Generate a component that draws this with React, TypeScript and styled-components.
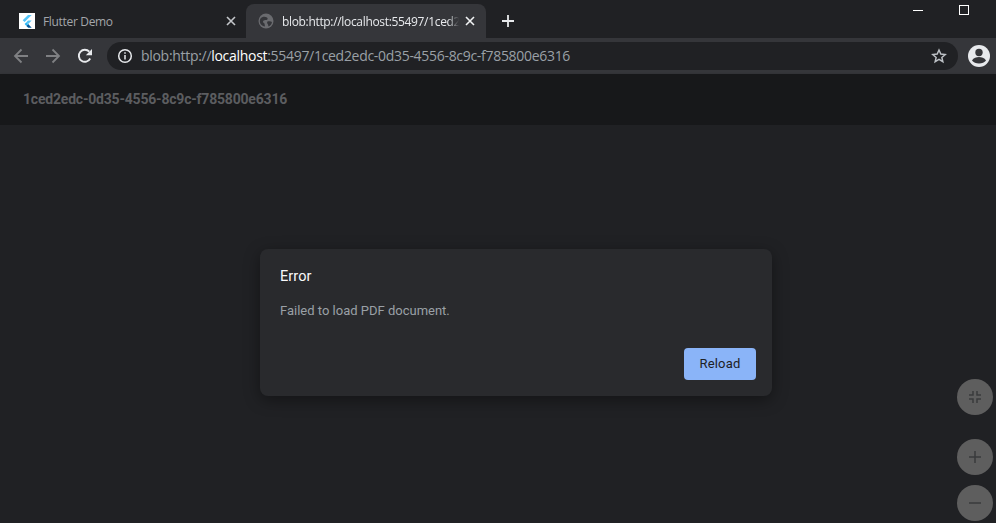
import React from 'react'
import styled, { createGlobalStyle } from 'styled-components'

const GlobalStyle = createGlobalStyle`
  html, body {
    margin: 0;
    padding: 0;
    height: 100%;
    background: #202124;
    overflow: hidden;
  }
  * {
    box-sizing: border-box;
  }
`

const Page = styled.div`
  display: flex;
  flex-direction: column;
  width: 996px;
  height: 523px;
  overflow: hidden;
  font-family: Roboto, "Liberation Sans", sans-serif;
`

const TabStrip = styled.div`
  display: flex;
  align-items: flex-end;
  height: 38px;
  flex: none;
  background: #202124;
`

const Tab = styled.div<{ active?: boolean }>`
  position: relative;
  display: flex;
  align-items: center;
  height: 34px;
  width: ${({ active }) => (active ? '240px' : '246px')};
  padding: ${({ active }) => (active ? '0 8px 0 12px' : '0 7px 0 19px')};
  border-radius: 8px 8px 0 0;
  background: ${({ active }) => (active ? '#35363a' : 'transparent')};
`

const TabTitle = styled.span<{ active?: boolean }>`
  flex: 1;
  margin-left: 8px;
  overflow: hidden;
  white-space: nowrap;
  font-family: "Open Sans", Roboto, sans-serif;
  font-size: 12px;
  letter-spacing: -0.33px;
  color: ${({ active }) => (active ? '#e8eaed' : '#a3a6aa')};
  -webkit-mask-image: ${({ active }) =>
    active ? 'linear-gradient(to right, #000 calc(100% - 14px), transparent calc(100% - 3px))' : 'none'};
`

const TabClose = styled.button`
  display: flex;
  align-items: center;
  justify-content: center;
  flex: none;
  width: 16px;
  height: 16px;
  padding: 0;
  border: 0;
  background: transparent;
`

const NewTab = styled.button`
  display: flex;
  align-items: center;
  justify-content: center;
  align-self: center;
  width: 28px;
  height: 28px;
  margin: 4px 0 0 8px;
  padding: 0;
  border: 0;
  background: transparent;
`

const WindowControls = styled.div`
  display: flex;
  align-self: flex-start;
  gap: 36px;
  margin-left: auto;
  padding: 5px 27px 0 0;
`

const Toolbar = styled.div`
  display: flex;
  align-items: center;
  height: 36px;
  flex: none;
  padding: 0 6px 0 9px;
  background: #35363a;
`

const NavButton = styled.button`
  display: flex;
  align-items: center;
  justify-content: center;
  width: 24px;
  height: 24px;
  margin-right: 8px;
  padding: 0;
  border: 0;
  background: transparent;
`

const Omnibox = styled.div`
  display: flex;
  align-items: center;
  flex: 1;
  height: 28px;
  margin-left: 2px;
  padding: 0 11px 0 10px;
  border-radius: 14px;
  background: #202124;
`

const UrlText = styled.div`
  flex: 1;
  margin-left: 8px;
  padding-bottom: 2px;
  white-space: nowrap;
  font-family: "Open Sans", Roboto, sans-serif;
  font-size: 14px;
  letter-spacing: -0.3px;
  color: #9aa0a6;
`

const UrlHost = styled.span`
  color: #fff;
`

const Avatar = styled.div`
  display: flex;
  align-items: center;
  justify-content: center;
  width: 22px;
  height: 22px;
  margin-left: 10px;
`

const AppBar = styled.div`
  display: flex;
  align-items: center;
  height: 51px;
  flex: none;
  padding: 0 23px 2px;
  background: #17181a;
  box-shadow: 0 1px 3px rgba(0, 0, 0, 0.25);
`

const DocTitle = styled.div`
  font-size: 14px;
  font-weight: 700;
  letter-spacing: -0.2px;
  color: #5c5d60;
`

const Viewer = styled.div`
  position: relative;
  flex: 1;
  display: flex;
  align-items: flex-start;
  justify-content: center;
  padding: 124px 0 0 36px;
  background: #202124;
`

const Dialog = styled.div`
  display: flex;
  flex-direction: column;
  width: 512px;
  height: 147px;
  padding: 19px 16px 16px 20px;
  border-radius: 8px;
  background: #292a2d;
  box-shadow: 0 4px 16px rgba(0, 0, 0, 0.4);
`

const DialogTitle = styled.div`
  font-size: 14.5px;
  font-weight: 400;
  letter-spacing: 0.1px;
  line-height: 18px;
  color: #f8f9fa;
`

const DialogBody = styled.div`
  margin-top: 17px;
  font-size: 13px;
  line-height: 16px;
  color: #9aa0a6;
`

const DialogActions = styled.div`
  display: flex;
  justify-content: flex-end;
  margin-top: auto;
`

const ReloadButton = styled.button`
  width: 72px;
  height: 32px;
  padding: 0 0 2px;
  border: 0;
  border-radius: 4px;
  background: #8ab4f8;
  font-family: Roboto, sans-serif;
  font-size: 13px;
  font-weight: 400;
  letter-spacing: 0.2px;
  color: #202124;
`

const Fab = styled.button<{ top: number }>`
  position: absolute;
  right: 3px;
  top: ${({ top }) => top}px;
  display: flex;
  align-items: center;
  justify-content: center;
  width: 36px;
  height: 36px;
  padding: 0;
  border: 0;
  border-radius: 50%;
  background: #5e5e5e;
`

const CloseIcon = ({ color }: { color: string }) => (
  <svg width="10" height="10" viewBox="0 0 10 10">
    <path d="M1 1l8 8M9 1L1 9" stroke={color} strokeWidth="1.6" />
  </svg>
)

const FlutterFavicon = () => (
  <svg width="16" height="16" viewBox="0 0 16 16">
    <rect width="16" height="16" fill="#fff" />
    <path d="M9 2h3.700L5.600 9.100 3.700 7.300z" fill="#54c5f8" />
    <path d="M9 7.600h3.700L9.200 11.100 7.300 9.300z" fill="#54c5f8" />
    <path d="M7.400 12.900l1.800-1.800 3.500 3.600H9.200z" fill="#01579b" />
    <path d="M5.600 11.100l1.800-1.800 1.800 1.800-1.800 1.800z" fill="#29b6f6" />
  </svg>
)

const GlobeIcon = () => (
  <svg width="16" height="16" viewBox="0 0 16 16">
    <circle cx="8" cy="8" r="7.500" fill="#6a6b6f" />
    <path
      d="M2.500 5.500C4 3.500 7 3 9 4.500c1.200 1 .6 2.300-.6 2.500-1.400.2-2.600 0-3.200 1-.6 1 .3 2 1.300 2.500l.5 3C4 13 2.500 11.500 2 9.500c-.3-1.400 0-3 .5-4zM9.500 8.500c1.500-.5 3.500-.3 4.500.5-.3 2-1.500 3.500-3.500 4.500l-.5-2c-.8-.8-1.200-2.400-.5-3z"
      fill="#35363a"
    />
  </svg>
)

export default function App() {
  return (
    <Page>
      <GlobalStyle />
      <TabStrip>
        <Tab>
          <FlutterFavicon />
          <TabTitle>Flutter Demo</TabTitle>
          <TabClose>
            <CloseIcon color="#c4c7cb" />
          </TabClose>
        </Tab>
        <Tab active>
          <GlobeIcon />
          <TabTitle active>blob:http://localhost:55497/1ced2</TabTitle>
          <TabClose>
            <CloseIcon color="#f1f3f4" />
          </TabClose>
        </Tab>
        <NewTab>
          <svg width="14" height="14" viewBox="0 0 14 14">
            <path d="M7 1v12M1 7h12" stroke="#e8eaed" strokeWidth="1.8" />
          </svg>
        </NewTab>
        <WindowControls>
          <svg width="10" height="10" viewBox="0 0 10 10">
            <path d="M0 5.500h10" stroke="#fff" strokeWidth="1" />
          </svg>
          <svg width="10" height="10" viewBox="0 0 10 10">
            <rect x="0.500" y="0.500" width="9" height="9" fill="none" stroke="#fff" strokeWidth="1" />
          </svg>
        </WindowControls>
      </TabStrip>
      <Toolbar>
        <NavButton>
          <svg width="16" height="16" viewBox="0 0 16 16">
            <path d="M15 8H2.500M8.500 1.500L2 8l6.500 6.500" fill="none" stroke="#7f8083" strokeWidth="1.800" />
          </svg>
        </NavButton>
        <NavButton>
          <svg width="16" height="16" viewBox="0 0 16 16">
            <path d="M1 8h12.500M7.500 1.500L14 8l-6.500 6.500" fill="none" stroke="#7f8083" strokeWidth="1.800" />
          </svg>
        </NavButton>
        <NavButton>
          <svg width="16" height="16" viewBox="0 0 16 16">
            <path d="M13.200 10.500A6 6 0 1 1 12.300 3.700" fill="none" stroke="#e8eaed" strokeWidth="1.900" />
            <path d="M15 1v6.200H8.800z" fill="#e8eaed" />
          </svg>
        </NavButton>
        <Omnibox>
          <svg width="16" height="16" viewBox="0 0 16 16">
            <circle cx="8" cy="8" r="6.300" fill="none" stroke="#e8eaed" strokeWidth="1.500" />
            <path d="M8 7v4.500M8 4.300v1.500" stroke="#e8eaed" strokeWidth="1.500" />
          </svg>
          <UrlText>
            blob:http://<UrlHost>localhost</UrlHost>:55497/1ced2edc-0d35-4556-8c9c-f785800e6316
          </UrlText>
          <svg width="16" height="16" viewBox="0 0 24 24">
            <path
              d="M12 3l2.700 6.100 6.600.6-5 4.400 1.500 6.500L12 17.200l-5.800 3.400 1.500-6.500-5-4.400 6.600-.6z"
              fill="none"
              stroke="#bdc1c6"
              strokeWidth="2.200"
            />
          </svg>
        </Omnibox>
        <Avatar>
          <svg width="22" height="22" viewBox="0 0 22 22">
            <circle cx="11" cy="11" r="11" fill="#e8eaed" />
            <circle cx="11" cy="7.500" r="3.700" fill="#35363a" />
            <path d="M4 15.500c1.500-2.700 4.500-3.500 7-3.500s5.500.8 7 3.500c-1.500 2-4 3-7 3s-5.500-1-7-3z" fill="#35363a" />
          </svg>
        </Avatar>
      </Toolbar>
      <AppBar>
        <DocTitle>1ced2edc-0d35-4556-8c9c-f785800e6316</DocTitle>
      </AppBar>
      <Viewer>
        <Dialog>
          <DialogTitle>Error</DialogTitle>
          <DialogBody>Failed to load PDF document.</DialogBody>
          <DialogActions>
            <ReloadButton>Reload</ReloadButton>
          </DialogActions>
        </Dialog>
        <Fab top={254}>
          <svg width="14" height="14" viewBox="0 0 14 14">
            <path
              d="M5 1v4H1M9 1v4h4M5 13V9H1M9 13V9h4"
              fill="none"
              stroke="#3a3b3d"
              strokeWidth="1.500"
            />
          </svg>
        </Fab>
        <Fab top={314}>
          <svg width="14" height="14" viewBox="0 0 14 14">
            <path d="M7 1v12M1 7h12" stroke="#3a3b3d" strokeWidth="1.500" />
          </svg>
        </Fab>
        <Fab top={360}>
          <svg width="14" height="14" viewBox="0 0 14 14">
            <path d="M1 7h12" stroke="#3a3b3d" strokeWidth="1.500" />
          </svg>
        </Fab>
      </Viewer>
    </Page>
  )
}
